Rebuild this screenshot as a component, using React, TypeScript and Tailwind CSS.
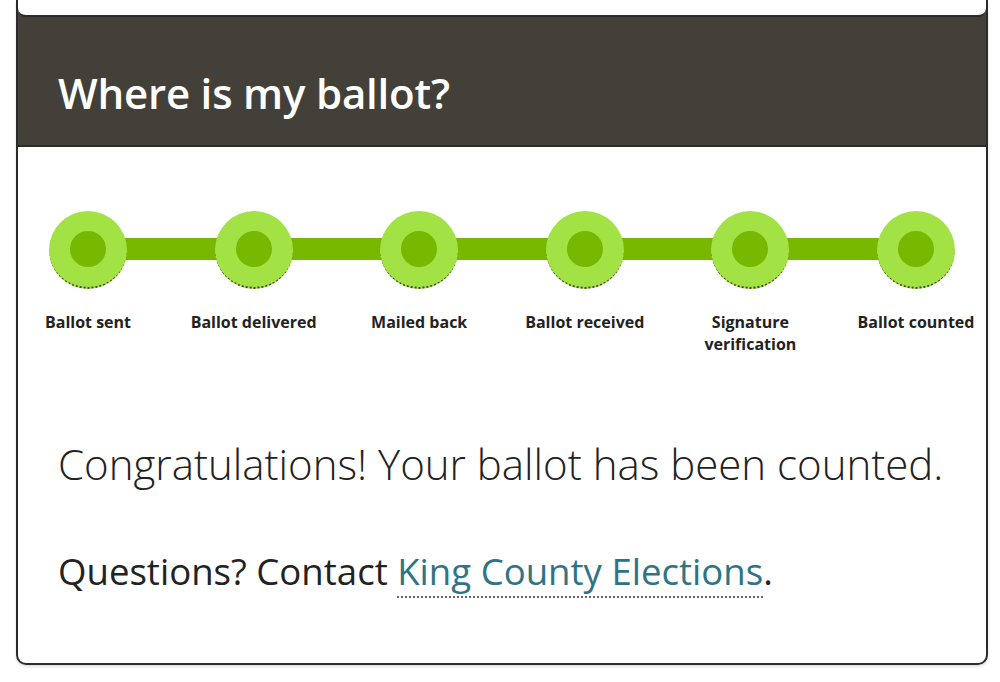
const steps = [
  'Ballot sent',
  'Ballot delivered',
  'Mailed back',
  'Ballot received',
  'Signature verification',
  'Ballot counted',
];

function Step({ label }: { label: string }) {
  return (
    <li className="relative z-10 flex w-[78px] flex-col items-center">
      <div className="flex h-[78px] w-[78px] items-center justify-center rounded-full border-b-2 border-dotted border-[#3d4a25] bg-[#a2e245]">
        <div className="h-[36px] w-[36px] rounded-full bg-[#78b800]" />
      </div>
      <p className="mt-[22px] w-[140px] text-center text-[16px] font-bold leading-[22px] text-[#222]">
        {label}
      </p>
    </li>
  );
}

export default function App() {
  return (
    <div className="min-h-[682px] bg-white font-['Open_Sans',sans-serif]">
      <div className="ml-[16px] w-[972px] overflow-hidden rounded-b-[10px] border-x-2 border-b-2 border-[#2b2b2b] shadow-[0_2px_3px_rgba(0,0,0,0.12)]">
        {/* Header */}
        <div className="border-b-2 border-[#2b2b2b] bg-[#433f39]">
          <div className="h-[17px] rounded-b-[8px] border-b-2 border-[#2b2b2b] bg-white" />
          <h2 className="flex h-[128px] items-center pl-[40px] pt-[23px] text-[42px] font-semibold tracking-[-0.2px] text-white">
            Where is my ballot?
          </h2>
        </div>

        {/* Tracker */}
        <div className="relative px-[31px] pt-[64px]">
          <div className="absolute left-[80px] right-[80px] top-[91px] h-[22px] bg-[#78b800]" />
          <ul className="flex justify-between">
            {steps.map((s) => (
              <Step key={s} label={s} />
            ))}
          </ul>
        </div>

        {/* Status */}
        <div className="px-[40px] pt-[81px] pb-[66px] text-[#222]">
          <p className="text-[42px] font-light leading-[56px]">
            Congratulations! Your ballot has been counted.
          </p>
          <p className="mt-[53px] text-[36.6px] leading-[52px]">
            Questions? Contact{' '}
            <a href="#" className="border-b-2 border-dotted border-[#666] text-[#2e7486]">
              King County Elections
            </a>
            .
          </p>
        </div>
      </div>
    </div>
  );
}
